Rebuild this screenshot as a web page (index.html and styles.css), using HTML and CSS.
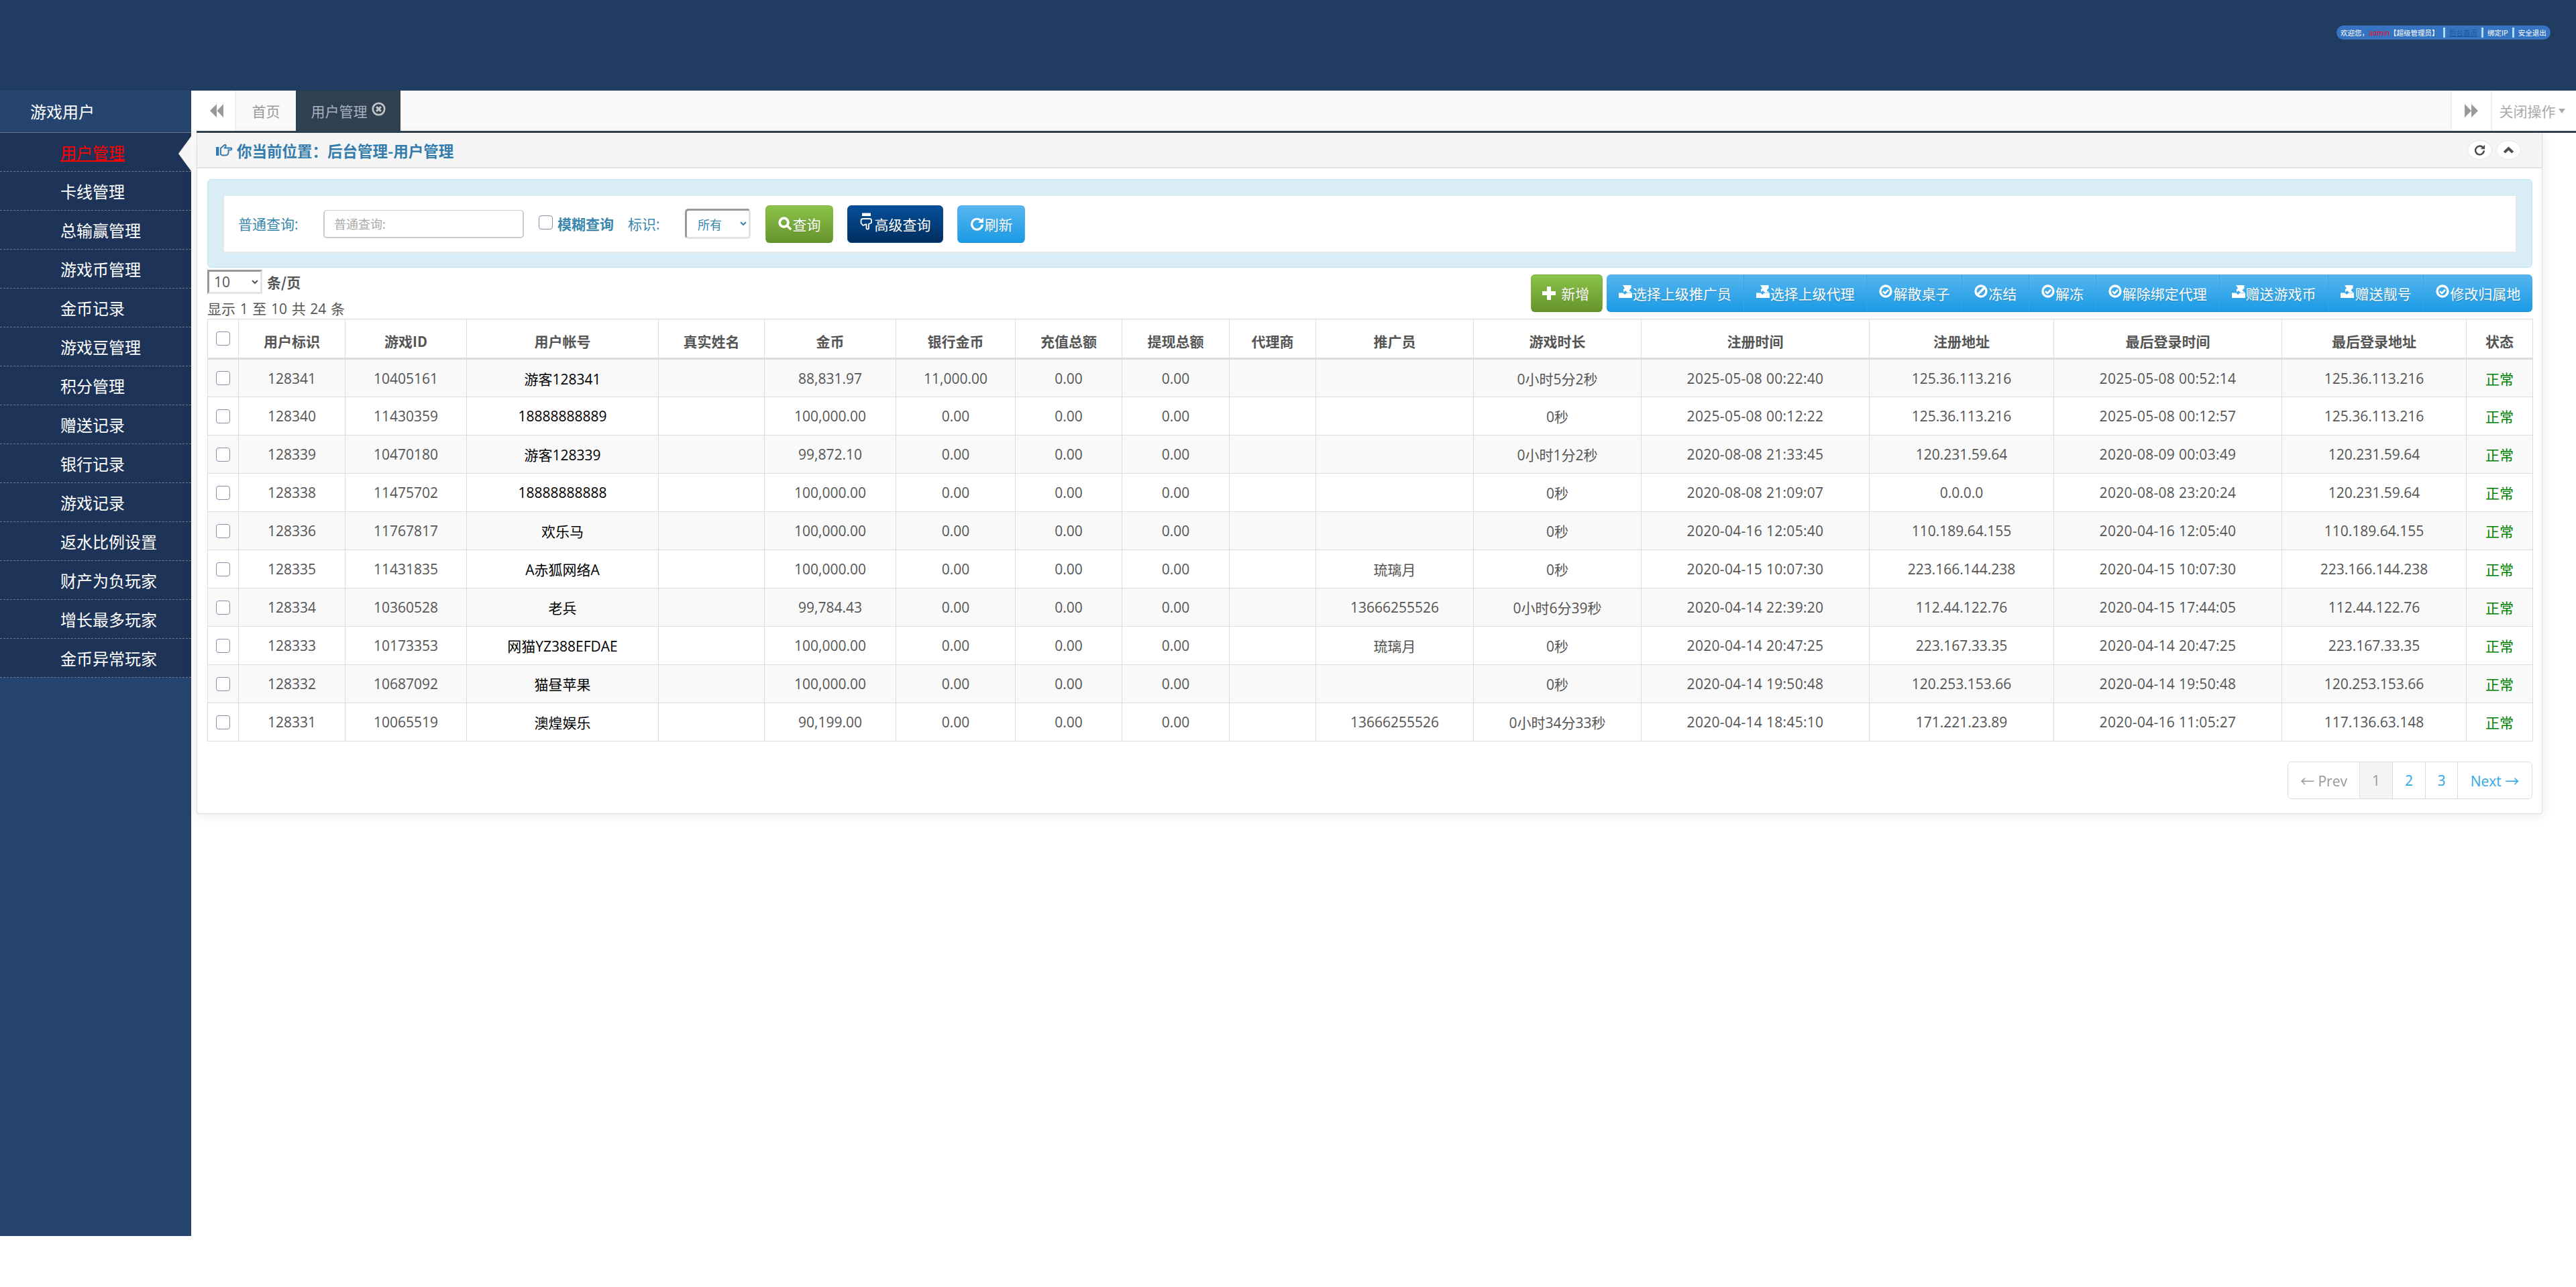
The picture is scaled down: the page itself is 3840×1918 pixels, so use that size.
FILE: index.html
```html
<!DOCTYPE html>
<html lang="zh">
<head>
<meta charset="utf-8">
<title>用户管理</title>
<link rel="stylesheet" href="styles.css">
</head>
<body>
<svg class="defs" width="0" height="0" aria-hidden="true">
  <symbol id="i-check" viewBox="0 0 20 20"><circle cx="10" cy="10" r="8" fill="none" stroke="currentColor" stroke-width="3.4"/><path d="M6 10.2l3 3 5-5.4" fill="none" stroke="currentColor" stroke-width="2.6"/></symbol>
  <symbol id="i-ban" viewBox="0 0 20 20"><circle cx="10" cy="10" r="8" fill="none" stroke="currentColor" stroke-width="3.4"/><path d="M5 15L15 5" fill="none" stroke="currentColor" stroke-width="3.4"/></symbol>
  <symbol id="i-tray" viewBox="0 0 20 20"><path d="M0 12.5h6.5l2.5 2.6 3-2.6H20V20H0z" fill="currentColor"/><path d="M6 1h12.500v4.500L15.500 8.500 19 12h-6L9.800 9 7.500 11.500 6.800 7.500 9 5.500z" fill="currentColor"/></symbol>
  <symbol id="i-plus" viewBox="0 0 20 20"><path d="M7 0h6v7h7v6h-7v7H7v-7H0V7h7z" fill="currentColor"/></symbol>
  <symbol id="i-search" viewBox="0 0 22 22"><circle cx="9" cy="9" r="6.700" fill="none" stroke="currentColor" stroke-width="4"/><path d="M13.500 13.500L20 20" fill="none" stroke="currentColor" stroke-width="3.600"/></symbol>
  <symbol id="i-refresh" viewBox="0 0 20 20"><path d="M15.500 5.500A7.500 7.500 0 1 0 17.500 11" fill="none" stroke="currentColor" stroke-width="3"/><path d="M19 1v7.500h-7.500z" fill="currentColor"/></symbol>
  <symbol id="i-hand" viewBox="0 0 18 26"><rect x="3" y="0" width="13" height="4.500" fill="currentColor"/><path d="M1.500 11.500c0-2 1.500-3 3-3h10c1.500 0 2.500 1 2.500 2.500v3.500l-4 2v6c0 2-3.500 2-3.500 0v-5.500H8l-3.500 1.500L1.500 15z" fill="none" stroke="currentColor" stroke-width="1.800"/></symbol>
  <symbol id="i-handr" viewBox="0 0 25 20"><rect x="0" y="5" width="4.500" height="13" fill="currentColor"/><path d="M7 7l5.500-5c1.200-1 2.800.5 2 1.800L13 6.500h9c2 0 2 3 0 3h-3.500v3.500c0 3-2 4.500-4.500 4.500H9.500L7 16z" fill="none" stroke="currentColor" stroke-width="1.900"/></symbol>
  <symbol id="i-times" viewBox="0 0 20 20"><circle cx="10" cy="10" r="8.300" fill="none" stroke="currentColor" stroke-width="2.600"/><path d="M6.800 6.800l6.400 6.400M13.200 6.800l-6.400 6.400" fill="none" stroke="currentColor" stroke-width="3"/></symbol>
  <symbol id="i-left" viewBox="0 0 20 20"><path d="M10 0v20L0 10zM20 0v20L10.500 10z" fill="currentColor"/></symbol>
  <symbol id="i-right" viewBox="0 0 20 20"><path d="M0 0l10 10L0 20zM10 0l10 10-10 10z" fill="currentColor"/></symbol>
  <symbol id="i-up" viewBox="0 0 20 14"><path d="M10 1l9 8.500-3.300 3.500L10 7.500 4.300 13 1 9.500z" fill="currentColor"/></symbol>
</svg>

<header class="topbar">
  <div class="userpill">
    <span class="pill-text">欢迎您，<span class="pill-name">admin</span>【超级管理员】</span>
    <span class="pill-sep"></span><a class="pill-link pill-home">后台首页</a>
    <span class="pill-sep"></span><a class="pill-link">绑定IP</a>
    <span class="pill-sep"></span><a class="pill-link">安全退出</a>
  </div>
</header>

<div class="layout">
  <aside class="sidebar">
    <div class="side-title">游戏用户</div>
    <ul class="side-list">
      <li class="side-item side-active"><a>用户管理</a></li>
      <li class="side-item"><a>卡线管理</a></li>
      <li class="side-item"><a>总输赢管理</a></li>
      <li class="side-item"><a>游戏币管理</a></li>
      <li class="side-item"><a>金币记录</a></li>
      <li class="side-item"><a>游戏豆管理</a></li>
      <li class="side-item"><a>积分管理</a></li>
      <li class="side-item"><a>赠送记录</a></li>
      <li class="side-item"><a>银行记录</a></li>
      <li class="side-item"><a>游戏记录</a></li>
      <li class="side-item"><a>返水比例设置</a></li>
      <li class="side-item"><a>财产为负玩家</a></li>
      <li class="side-item"><a>增长最多玩家</a></li>
      <li class="side-item"><a>金币异常玩家</a></li>
    </ul>
  </aside>

  <main class="content">
    <nav class="tabs">
      <a class="tab tab-arrow"><svg class="ic-arrow"><use href="#i-left"/></svg></a>
      <a class="tab tab-home">首页</a>
      <a class="tab tab-current">用户管理<svg class="ic-close"><use href="#i-times"/></svg></a>
      <span class="tabs-fill"></span>
      <a class="tab tab-arrow tab-arrow-right"><svg class="ic-arrow"><use href="#i-right"/></svg></a>
      <a class="tab tab-close">关闭操作<span class="caret"></span></a>
    </nav>
    <div class="tabs-rule"></div>

    <section class="panel">
      <div class="panel-head">
        <svg class="ic-handr"><use href="#i-handr"/></svg>
        <h1 class="crumb">你当前位置：后台管理-用户管理</h1>
        <span class="head-tools">
          <a class="round-btn"><svg class="ic-round"><use href="#i-refresh"/></svg></a>
          <a class="round-btn"><svg class="ic-round"><use href="#i-up"/></svg></a>
        </span>
      </div>

      <div class="panel-body">
        <div class="search-well">
          <form class="search-box">
            <label class="search-label">普通查询:</label>
            <input class="search-input" type="text" placeholder="普通查询:">
            <input class="cb cb-fuzzy" type="checkbox">
            <label class="fuzzy-label">模糊查询</label>
            <label class="search-label mark-label">标识:</label>
            <select class="mark-select"><option>所有</option></select>
            <button class="btn btn-green" type="button"><svg class="ic-btn"><use href="#i-search"/></svg>查询</button>
            <button class="btn btn-navy" type="button"><svg class="ic-hand"><use href="#i-hand"/></svg>高级查询</button>
            <button class="btn btn-blue" type="button"><svg class="ic-btn"><use href="#i-refresh"/></svg>刷新</button>
          </form>
        </div>

        <div class="toolbar">
          <div class="page-meta">
            <div class="page-size"><select class="size-select"><option>10</option></select><span class="size-unit">条/页</span></div>
            <div class="page-info">显示 1 至 10 共 24 条</div>
          </div>
          <div class="actions">
            <a class="btn btn-green btn-add"><svg class="ic-plus"><use href="#i-plus"/></svg>新增</a>
            <div class="btn-group">
              <a class="seg"><svg class="ic-seg"><use href="#i-tray"/></svg>选择上级推广员</a>
              <a class="seg"><svg class="ic-seg"><use href="#i-tray"/></svg>选择上级代理</a>
              <a class="seg"><svg class="ic-seg"><use href="#i-check"/></svg>解散桌子</a>
              <a class="seg"><svg class="ic-seg"><use href="#i-ban"/></svg>冻结</a>
              <a class="seg"><svg class="ic-seg"><use href="#i-check"/></svg>解冻</a>
              <a class="seg"><svg class="ic-seg"><use href="#i-check"/></svg>解除绑定代理</a>
              <a class="seg"><svg class="ic-seg"><use href="#i-tray"/></svg>赠送游戏币</a>
              <a class="seg"><svg class="ic-seg"><use href="#i-tray"/></svg>赠送靓号</a>
              <a class="seg"><svg class="ic-seg"><use href="#i-check"/></svg>修改归属地</a>
            </div>
          </div>
        </div>

        <table class="grid">
          <colgroup>
            <col class="w46"><col class="w159"><col class="w181"><col class="w286"><col class="w158"><col class="w196"><col class="w178"><col class="w159"><col class="w160"><col class="w129"><col class="w235"><col class="w250"><col class="w340"><col class="w275"><col class="w340"><col class="w275"><col class="w99">
          </colgroup>
          <thead>
            <tr><th><input class="cb" type="checkbox"></th><th>用户标识</th><th>游戏ID</th><th>用户帐号</th><th>真实姓名</th><th>金币</th><th>银行金币</th><th>充值总额</th><th>提现总额</th><th>代理商</th><th>推广员</th><th>游戏时长</th><th>注册时间</th><th>注册地址</th><th>最后登录时间</th><th>最后登录地址</th><th>状态</th></tr>
          </thead>
          <tbody>
            <tr><td><input class="cb" type="checkbox"></td><td>128341</td><td>10405161</td><td class="acct">游客128341</td><td></td><td>88,831.97</td><td>11,000.00</td><td>0.00</td><td>0.00</td><td></td><td></td><td>0小时5分2秒</td><td>2025-05-08 00:22:40</td><td>125.36.113.216</td><td>2025-05-08 00:52:14</td><td>125.36.113.216</td><td class="ok">正常</td></tr>
            <tr><td><input class="cb" type="checkbox"></td><td>128340</td><td>11430359</td><td class="acct">18888888889</td><td></td><td>100,000.00</td><td>0.00</td><td>0.00</td><td>0.00</td><td></td><td></td><td>0秒</td><td>2025-05-08 00:12:22</td><td>125.36.113.216</td><td>2025-05-08 00:12:57</td><td>125.36.113.216</td><td class="ok">正常</td></tr>
            <tr><td><input class="cb" type="checkbox"></td><td>128339</td><td>10470180</td><td class="acct">游客128339</td><td></td><td>99,872.10</td><td>0.00</td><td>0.00</td><td>0.00</td><td></td><td></td><td>0小时1分2秒</td><td>2020-08-08 21:33:45</td><td>120.231.59.64</td><td>2020-08-09 00:03:49</td><td>120.231.59.64</td><td class="ok">正常</td></tr>
            <tr><td><input class="cb" type="checkbox"></td><td>128338</td><td>11475702</td><td class="acct">18888888888</td><td></td><td>100,000.00</td><td>0.00</td><td>0.00</td><td>0.00</td><td></td><td></td><td>0秒</td><td>2020-08-08 21:09:07</td><td>0.0.0.0</td><td>2020-08-08 23:20:24</td><td>120.231.59.64</td><td class="ok">正常</td></tr>
            <tr><td><input class="cb" type="checkbox"></td><td>128336</td><td>11767817</td><td class="acct">欢乐马</td><td></td><td>100,000.00</td><td>0.00</td><td>0.00</td><td>0.00</td><td></td><td></td><td>0秒</td><td>2020-04-16 12:05:40</td><td>110.189.64.155</td><td>2020-04-16 12:05:40</td><td>110.189.64.155</td><td class="ok">正常</td></tr>
            <tr><td><input class="cb" type="checkbox"></td><td>128335</td><td>11431835</td><td class="acct">A赤狐网络A</td><td></td><td>100,000.00</td><td>0.00</td><td>0.00</td><td>0.00</td><td></td><td>琉璃月</td><td>0秒</td><td>2020-04-15 10:07:30</td><td>223.166.144.238</td><td>2020-04-15 10:07:30</td><td>223.166.144.238</td><td class="ok">正常</td></tr>
            <tr><td><input class="cb" type="checkbox"></td><td>128334</td><td>10360528</td><td class="acct">老兵</td><td></td><td>99,784.43</td><td>0.00</td><td>0.00</td><td>0.00</td><td></td><td>13666255526</td><td>0小时6分39秒</td><td>2020-04-14 22:39:20</td><td>112.44.122.76</td><td>2020-04-15 17:44:05</td><td>112.44.122.76</td><td class="ok">正常</td></tr>
            <tr><td><input class="cb" type="checkbox"></td><td>128333</td><td>10173353</td><td class="acct">网猫YZ388EFDAE</td><td></td><td>100,000.00</td><td>0.00</td><td>0.00</td><td>0.00</td><td></td><td>琉璃月</td><td>0秒</td><td>2020-04-14 20:47:25</td><td>223.167.33.35</td><td>2020-04-14 20:47:25</td><td>223.167.33.35</td><td class="ok">正常</td></tr>
            <tr><td><input class="cb" type="checkbox"></td><td>128332</td><td>10687092</td><td class="acct">猫昼苹果</td><td></td><td>100,000.00</td><td>0.00</td><td>0.00</td><td>0.00</td><td></td><td></td><td>0秒</td><td>2020-04-14 19:50:48</td><td>120.253.153.66</td><td>2020-04-14 19:50:48</td><td>120.253.153.66</td><td class="ok">正常</td></tr>
            <tr><td><input class="cb" type="checkbox"></td><td>128331</td><td>10065519</td><td class="acct">澳煌娱乐</td><td></td><td>90,199.00</td><td>0.00</td><td>0.00</td><td>0.00</td><td></td><td>13666255526</td><td>0小时34分33秒</td><td>2020-04-14 18:45:10</td><td>171.221.23.89</td><td>2020-04-16 11:05:27</td><td>117.136.63.148</td><td class="ok">正常</td></tr>
          </tbody>
        </table>

        <div class="pager-row">
          <div class="pager">
            <a class="pg pg-off pg-prev">← Prev</a>
            <a class="pg pg-cur">1</a>
            <a class="pg">2</a>
            <a class="pg pg-three">3</a>
            <a class="pg pg-next">Next →</a>
          </div>
        </div>
      </div>
    </section>
  </main>
</div>
</body>
</html>
```

FILE: styles.css
```css
* { box-sizing: border-box; }
html, body { margin: 0; padding: 0; }
body {
  background: #fff;
  color: #555;
  font-family: "Open Sans", "Noto Sans CJK SC", sans-serif;
  font-size: 21px;
  min-height: 1918px;
}
a { color: inherit; text-decoration: none; }
.defs { position: absolute; }

/* top */
.topbar {
  height: 135px;
  background: #203c61;
  display: flex;
  justify-content: flex-end;
  padding: 38px 38px 0 0;
}
.userpill {
  height: 21px;
  width: 319px;
  border-radius: 11px;
  background: #3574c1;
  color: #fff;
  font-size: 10.5px;
  line-height: 21px;
  display: flex;
  align-items: center;
  padding-left: 6px;
  white-space: nowrap;
  font-family: "Noto Sans CJK SC", sans-serif;
}
.pill-text { width: 153px; flex: none; }
.pill-name { color: #f00; font-family: "Open Sans", sans-serif; }
.pill-sep { width: 3px; height: 15px; background: #a9dcf5; flex: none; }
.pill-link { padding: 0 6px; }
.pill-home { color: #1b5797; text-decoration: underline; }

/* layout */
.layout { display: flex; align-items: flex-start; }
.sidebar {
  width: 285px;
  height: 1707px;
  flex: none;
  background: #25446f;
  color: #fff;
  font-size: 24px;
  font-family: "Noto Sans CJK SC", sans-serif;
}
.side-title {
  height: 63px;
  line-height: 62px;
  padding-left: 45px;
  border-bottom: 1px solid #6b7a90;
}
.side-list { list-style: none; margin: 0; padding: 0; background: #1d3357; }
.side-item {
  position: relative;
  height: 58px;
  line-height: 57px;
  padding-left: 90px;
  border-bottom: 1px dashed #6f7a8e;
}
.side-active a { color: #f00; text-decoration: underline; }
.side-active::after {
  content: "";
  position: absolute;
  right: 0;
  top: 5px;
  border-style: solid;
  border-width: 26px 19px 26px 0;
  border-color: transparent #f5f5f5 transparent transparent;
}

/* content */
.content { flex: 1; min-width: 0; }
.tabs {
  height: 60px;
  margin-right: 6px;
  background: #fafafa;
  display: flex;
  color: #999;
}
.tab { display: flex; align-items: center; justify-content: center; height: 60px; }
.tab-arrow { width: 67px; background: #fff; border-right: 2px solid #eee; padding-left: 10px; }
.tab-arrow-right { width: 60px; border-left: 2px solid #eee; border-right: 0; padding-left: 0; }
.tab-home { width: 89px; }
.tab-current { width: 156px; background: #2f4050; color: #a7b1c2; }
.tab-close { width: 121px; background: #fff; border-left: 2px solid #eee; color: #aaa; }
.tabs-fill { flex: 1; }
.ic-arrow { width: 20px; height: 20px; color: #999; }
.ic-close { width: 21px; height: 21px; margin: 0 0 6px 6px; color: #c4c4c4; }
.caret {
  margin-left: 4px;
  border-style: solid;
  border-width: 7px 5.5px 0;
  border-color: #aaa transparent transparent;
}
.tabs-rule { height: 3px; margin-left: 8px; background: #2f4050; }

.panel {
  margin: 0 50px 0 8px;
  background: #fff;
  border: 1px solid #ddd;
  border-top: 0;
  border-radius: 0 0 4px 4px;
  box-shadow: 0 2px 20px rgba(0, 0, 0, .09);
}
.panel-head {
  height: 53px;
  background: #f5f5f5;
  border-bottom: 2px solid #e3e3e3;
  display: flex;
  align-items: center;
  padding: 0 31px 0 28px;
  color: #327cae;
}
.ic-handr { width: 25px; height: 20px; margin-right: 6px; }
.crumb { margin: 0; font-size: 22.5px; font-weight: 700; color: #327cae; font-family: "Noto Sans CJK SC", sans-serif; line-height: 50px; }
.head-tools { margin-left: auto; display: flex; gap: 6px; }
.round-btn {
  width: 37px;
  height: 29px;
  background: #fff;
  border: 1px solid #e6e6e6;
  border-radius: 50%;
  display: flex;
  align-items: center;
  justify-content: center;
  color: #4c4c4c;
}
.ic-round { width: 17px; height: 17px; }

.panel-body { padding: 16px 14px 21px 15px; }
.search-well {
  height: 132px;
  padding: 23px;
  background: #d9edf7;
  border: 1px solid #bce8f1;
  border-radius: 6px;
}
.search-box {
  height: 86px;
  background: #fff;
  border: 1px solid #e6e6e6;
  border-width: 1px 1px 2px;
  display: flex;
  align-items: center;
  padding-left: 21px;
  color: #3a87ad;
}
.search-label { width: 127px; padding-bottom: 2px; }
.search-input {
  width: 299px;
  height: 42px;
  padding: 0 14px;
  font: 18px "Noto Sans CJK SC", sans-serif;
  border: 2px solid #ccc;
  border-width: 1px 2px 2px 2px;
  border-radius: 5px;
  background: #fff;
}
.search-input::placeholder { color: #aaa; }
.cb {
  appearance: none;
  display: block;
  margin: 0 auto;
  width: 21px;
  height: 21px;
  background: #fff;
  border: 1px solid #8f8ba5;
  border-radius: 4px;
}
.cb-fuzzy { margin: 0 7px 4px 22px; }
.fuzzy-label { font-weight: 700; width: 105px; padding-bottom: 2px; }
.mark-label { width: 85px; }
.mark-select {
  width: 98px;
  height: 45px;
  font: 18px "Noto Sans CJK SC", sans-serif;
  color: #3a87ad;
  background: #fff;
  padding-left: 12px;
  border: 3px solid;
  border-color: #999 #e3e3e3 #e3e3e3 #999;
  border-radius: 5px;
  margin-right: 22px;
}
.btn {
  height: 56px;
  border: 1px solid transparent;
  border-radius: 6px;
  color: #fff;
  font: 21px "Noto Sans CJK SC", sans-serif;
  display: inline-flex;
  align-items: center;
  justify-content: center;
  padding: 0;
  text-shadow: 0 1px 1px rgba(0, 0, 0, .15);
}
.search-box .btn { width: 101px; margin-right: 21px; }
.search-box .btn-navy { width: 143px; }
.btn-green { background: linear-gradient(#8bc34a, #66932c); border-color: #7fb03f #7fb03f #5f8a2a; }
.btn-navy { background: linear-gradient(#054f98, #012e60); border-color: #0a4a8c; }
.btn-blue { background: linear-gradient(#56b5ef, #1b9be5); border-color: #4db0ee #4db0ee #1a90d8; }
.ic-btn { width: 21px; height: 21px; margin-right: 1px; }
.ic-hand { width: 18px; height: 27px; margin: 0 4px 6px 0; }

/* toolbar */
.toolbar { display: flex; justify-content: space-between; height: 76px; }
.page-meta { padding-top: 3px; }
.page-size { display: flex; align-items: center; height: 36px; gap: 7px; }
.size-select {
  width: 82px;
  height: 36px;
  font: 21px "Open Sans", sans-serif;
  color: #555;
  background: #fff;
  padding-left: 3px;
  border: 3px solid;
  border-color: #999 #e3e3e3 #e3e3e3 #999;
  border-radius: 0;
}
.size-unit { font-weight: 700; font-family: "Noto Sans CJK SC", sans-serif; }
.page-info { line-height: 30px; margin-top: 7px; word-spacing: 1.2px; }
.actions { display: flex; gap: 6px; padding-top: 10px; }
.btn-add { width: 107px; height: 56px; gap: 8px; padding-right: 2px; }
.ic-plus { width: 20px; height: 20px; }
.btn-group {
  height: 56px;
  display: flex;
  color: #fff;
  border-radius: 6px;
  overflow: hidden;
  background: linear-gradient(#56b5ef, #1b9be5);
  border-bottom: 1px solid #1a90d8;
  font-family: "Noto Sans CJK SC", sans-serif;
  text-shadow: 0 1px 1px rgba(0, 0, 0, .2);
}
.seg {
  display: flex;
  align-items: center;
  padding: 0 17.8px 0 18px;
  border-left: 1px solid #38a3e6;
  white-space: nowrap;
}
.seg:first-child { border-left: 0; }
.ic-seg { width: 20px; height: 20px; margin: 0 1px 5px 0; }

/* table */
.grid {
  width: 3466px;
  table-layout: fixed;
  border-collapse: collapse;
  border: 1px solid #ddd;
}
.w46 { width: 46px; } .w159 { width: 159px; } .w181 { width: 181px; } .w286 { width: 286px; }
.w158 { width: 158px; } .w196 { width: 196px; } .w178 { width: 178px; } .w160 { width: 160px; }
.w129 { width: 129px; } .w235 { width: 235px; } .w250 { width: 250px; } .w340 { width: 340px; }
.w275 { width: 275px; } .w99 { width: 99px; }
.grid th, .grid td {
  padding: 0;
  text-align: center;
  vertical-align: middle;
  border: 1px solid #ddd;
  white-space: nowrap;
  overflow: hidden;
}
.grid th { height: 59px; font-weight: 700; border-bottom: 3px solid #ddd; padding-top: 6px; font-family: "Noto Sans CJK SC", sans-serif; }
.grid th:first-child { padding-top: 0; }
.grid td { height: 57px; font-size: 21px; }
.grid tbody tr:nth-child(odd) { background: #f9f9f9; }
.grid td:nth-child(13), .grid td:nth-child(15) { letter-spacing: .3px; }
.grid .acct { color: #000; }
.grid .ok { color: #008000; font-family: "Noto Sans CJK SC", sans-serif; }

/* pager */
.pager-row { display: flex; justify-content: flex-end; margin-top: 30px; }
.pager {
  display: flex;
  height: 56px;
  border: 1px solid #ddd;
  border-radius: 6px;
  color: #2ea8e8;
  overflow: hidden;
}
.pg {
  display: flex;
  align-items: center;
  justify-content: center;
  width: 49px;
  border-left: 1px solid #ddd;
}
.pg-prev { width: 106px; border-left: 0; }
.pg-three { width: 48px; }
.pg-next { width: 111px; }
.pg-off { color: #999; }
.pg-cur { background: #f4f4f4; color: #999; }
```
